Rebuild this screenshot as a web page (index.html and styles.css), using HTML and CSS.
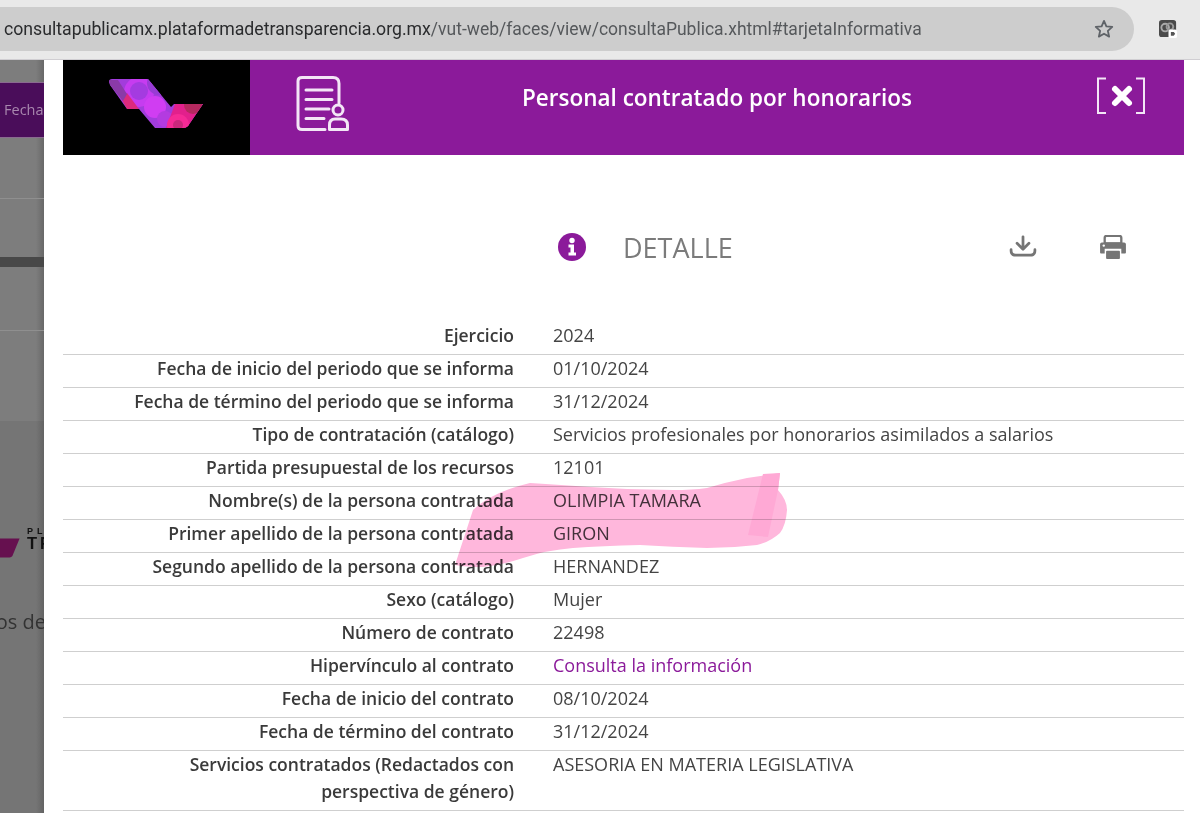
FILE: index.html
```html
<!DOCTYPE html>
<html lang="es">
<head>
<meta charset="utf-8">
<title>Personal contratado por honorarios</title>
<link rel="stylesheet" href="styles.css">
</head>
<body>
<header class="browser">
  <div class="url">
    <span class="url-text"><span class="host">consultapublicamx.plataformadetransparencia.org.mx</span>/vut-web/faces/view/consultaPublica.xhtml#tarjetaInformativa</span>
    <svg class="star" viewBox="0 0 24 24" width="22" height="22"><path d="M12 3.200l2.600 5.900 6.400.6-4.800 4.300 1.400 6.300L12 17.100l-5.600 3.200 1.400-6.300L3 9.700l6.400-.6z" fill="none" stroke="#5f6368" stroke-width="2" stroke-linejoin="round"/></svg>
  </div>
  <svg class="ext" viewBox="0 0 20 20" width="19" height="19">
    <rect width="18" height="18" x="0" y="0" rx="3" fill="#4a4a4a"/>
    <circle cx="6.500" cy="8" r="4" fill="none" stroke="#aaa" stroke-width="2"/>
    <circle cx="11.500" cy="7" r="3.500" fill="none" stroke="#999" stroke-width="2"/>
    <rect x="10" y="10" width="9" height="9" rx="2" fill="#fff"/>
    <path d="M12.500 12.500h3l1.500 2-1.500 2h-3z" fill="#555"/>
  </svg>
</header>
<main class="stage">
  <aside class="behind">
    <div class="tab-band"><span>Fecha de</span></div>
    <div class="rule rule-a"></div>
    <div class="dark-band"></div>
    <div class="rule rule-b"></div>
    <div class="lower">
      <div class="brand">
        <svg class="brand-mark" viewBox="0 0 22 20" width="21" height="20"><path d="M0 0h20.500L13 18.500q-1 1.500-3 1.500H0z" fill="#66104f"/></svg>
        <div class="brand-text"><span class="brand-small">PLATA</span><span class="brand-big">TRANS</span></div>
      </div>
      <p class="behind-copy">Datos de</p>
    </div>
  </aside>
  <section class="modal">
    <div class="banner">
      <div class="logo-box">
        <svg viewBox="0 0 96 52" width="96" height="52">
          <defs>
            <clipPath id="rib"><path d="M0 5Q0 2 3 2H39L62 30 65 27H94L79 49Q77 51 74 51H46L30 32H18L1 8Z"/></clipPath>
          </defs>
          <g clip-path="url(#rib)">
            <rect width="96" height="52" fill="#a23cdc"/>
            <circle cx="30" cy="15" r="15" fill="#c63cf0"/>
            <circle cx="30" cy="14" r="9" fill="#a43be0"/>
            <circle cx="50" cy="6" r="12" fill="#983cd4"/>
            <circle cx="46" cy="30" r="11" fill="#d03df2"/>
            <circle cx="56" cy="42" r="8" fill="#b33be0"/>
            <path d="M57 51L66 27H95L79 51Z" fill="#e2208c"/>
            <circle cx="84" cy="28" r="9" fill="#b5295f"/>
            <circle cx="69" cy="48" r="11" fill="#f52a96"/>
            <circle cx="69" cy="48" r="5" fill="#c9287c"/>
            <path d="M12 21L18 16 30 32H18Z" fill="#dc2a7c"/>
            <path d="M0 3H9L18 17 14 24 1 8Z" fill="#8a3aa8"/>
          </g>
        </svg>
      </div>
      <div class="banner-main">
        <svg class="doc-icon" viewBox="0 0 54 56" width="54" height="56" fill="none" stroke="#f3e6f6" stroke-linecap="round" stroke-linejoin="round">
          <path d="M29 53.500H6Q2 53.500 2 49.500V5Q2 1.500 6 1.500H37Q43 1.500 43 7.500V27" stroke-width="3"/>
          <path d="M10 14H36M10 23.500H36M10 33H33M10 42.500H28" stroke-width="3"/>
          <circle cx="42" cy="34" r="5" stroke-width="3"/>
          <path d="M33.500 53.500V49Q33.500 43 39 43H45Q51.500 43 51.500 49V53.500Z" stroke-width="3"/>
        </svg>
        <h1>Personal contratado por honorarios</h1>
        <svg class="close-icon" viewBox="0 0 48 38" width="48" height="38" fill="none" stroke="#f3e6f6">
          <path d="M9 1.500H1V36H9M39 1.500H47V36H39" stroke-width="2"/>
          <path d="M18 12L32 26M32 12L18 26" stroke="#fff" stroke-width="6" stroke-linecap="round"/>
        </svg>
      </div>
    </div>
    <div class="detail-head">
      <svg class="info-icon" viewBox="0 0 28 28" width="28" height="28"><circle cx="14" cy="14" r="14" fill="#8b1a9a"/><circle cx="14" cy="7.500" r="2.700" fill="#fff"/><path d="M10.500 11.500H16V19.500H18V22.500H10.500V19.500H12.500V14.500H10.500Z" fill="#fff"/></svg>
      <h2>DETALLE</h2>
      <div class="actions">
        <svg viewBox="0 0 30 24" width="28" height="22" fill="none" stroke="#757575" stroke-linecap="round" stroke-linejoin="round"><path d="M15 2V15M8.500 9L15 15.500 21.500 9" stroke-width="3"/><path d="M2 16V17Q2 22 7 22H23Q28 22 28 17V16" stroke-width="3"/></svg>
        <svg viewBox="0 0 30 26" width="28" height="24"><path d="M6 9V3Q6 1 8 1H22Q24 1 24 3V9Z" fill="none" stroke="#757575" stroke-width="2.500"/><path d="M3 8H27Q29 8 29 10V19Q29 20 28 20H24V15H6V20H2Q1 20 1 19V10Q1 8 3 8Z" fill="#757575"/><circle cx="5" cy="11.500" r="1.300" fill="#fff"/><rect x="7.500" y="17" width="15" height="9" rx="1" fill="#757575"/></svg>
      </div>
    </div>
    <dl class="table">
      <div class="row"><dt>Ejercicio</dt><dd>2024</dd></div>
      <div class="row"><dt>Fecha de inicio del periodo que se informa</dt><dd>01/10/2024</dd></div>
      <div class="row"><dt>Fecha de término del periodo que se informa</dt><dd>31/12/2024</dd></div>
      <div class="row"><dt>Tipo de contratación (catálogo)</dt><dd>Servicios profesionales por honorarios asimilados a salarios</dd></div>
      <div class="row"><dt>Partida presupuestal de los recursos</dt><dd>12101</dd></div>
      <div class="row"><dt>Nombre(s) de la persona contratada</dt><dd>OLIMPIA TAMARA</dd></div>
      <div class="row"><dt>Primer apellido de la persona contratada</dt><dd>GIRON</dd></div>
      <div class="row"><dt>Segundo apellido de la persona contratada</dt><dd>HERNANDEZ</dd></div>
      <div class="row"><dt>Sexo (catálogo)</dt><dd>Mujer</dd></div>
      <div class="row"><dt>Número de contrato</dt><dd>22498</dd></div>
      <div class="row"><dt>Hipervínculo al contrato</dt><dd><a href="#">Consulta la información</a></dd></div>
      <div class="row"><dt>Fecha de inicio del contrato</dt><dd>08/10/2024</dd></div>
      <div class="row"><dt>Fecha de término del contrato</dt><dd>31/12/2024</dd></div>
      <div class="row"><dt>Servicios contratados (Redactados con perspectiva de género)</dt><dd>ASESORIA EN MATERIA LEGISLATIVA</dd></div>
    </dl>
  </section>
  <svg class="marker" viewBox="0 0 340 100" width="340" height="100">
    <path d="M3 95L21 40Q40 22 78 13Q110 15 138 17Q180 20 221 20Q240 20 255 18Q275 12 295 8L328 3L326 20Q335 30 335 40Q334 55 328 63Q318 72 305 75Q280 78 255 78Q220 77 188 75Q150 76 121 78Q95 80 71 88Q50 95 31 97Q15 97 3 95Z" fill="#ffb7dc"/>
    <path d="M311 4L328 3 326 20 316 67 296 65Z" fill="#ffa9d5"/>
  </svg>
</main>
</body>
</html>
```
FILE: styles.css
```css
* { box-sizing: border-box; }
html, body { margin: 0; height: 813px; overflow: hidden; }
body { font-family: "Open Sans", sans-serif; background: #fff; color: #333; }

.browser {
  height: 60px;
  display: flex;
  align-items: center;
  background: #e9e9e9;
  border-bottom: 1px solid #d0ced2;
  padding: 0 22px 0 0;
}
.url {
  width: 1135px;
  height: 44px;
  margin-top: -1px;
  background: #cdcdcd;
  border-radius: 0 22px 22px 0;
  display: flex;
  align-items: center;
  justify-content: space-between;
  padding: 0 19px 0 4px;
}
.url-text { font-family: Roboto, sans-serif; font-size: 17.500px; color: #55585b; white-space: nowrap; }
.host { color: #2a2b2d; font-size: 17.700px; }
.star { flex: none; }
.ext { margin-left: 25px; flex: none; }

.stage { position: relative; display: flex; height: 753px; }

.behind {
  width: 44px;
  flex: none;
  overflow: hidden;
  background: linear-gradient(to right, #7d7d7d 0, #7d7d7d 36px, #686868 44px);
  padding-top: 22px;
  white-space: nowrap;
}
.tab-band {
  height: 56px;
  background: #4a0d5a;
  border-top: 1px solid #8a6a90;
  border-bottom: 1px solid #8a6a90;
  padding: 15px 0 0 4px;
  font-size: 14.500px;
  color: #a887ae;
  line-height: 24px;
}
.rule { height: 1px; background: #8f8f8f; }
.rule-a { margin-top: 60px; }
.dark-band { height: 10px; margin-top: 58px; background: #484848; }
.rule-b { margin-top: 63px; }
.lower {
  margin-top: 90px;
  height: 393px;
  background: linear-gradient(to right, #757575 0, #757575 36px, #636363 44px);
  padding-top: 106px;
}
.brand { display: flex; gap: 6px; width: 140px; height: 26px; }
.brand-mark { margin-top: 11px; flex: none; }
.brand-text { display: flex; flex-direction: column; font-family: "Liberation Sans", sans-serif; color: #111; line-height: 1; }
.brand-small { font-size: 9px; letter-spacing: 4px; font-weight: 700; }
.brand-big { font-size: 16.500px; letter-spacing: 3px; font-weight: 700; margin-top: -1px; }
.behind-copy { margin: 56px 0 0 -37px; font-size: 20px; color: #333; line-height: 26px; }

.modal {
  flex: 1;
  background: #fff;
  padding: 0 16px 0 19px;
  min-width: 0;
}
.banner { display: flex; height: 95px; }
.logo-box {
  width: 187px;
  flex: none;
  background: #000;
  padding: 17px 0 0 46px;
}
.logo-box svg { display: block; }
.banner-main {
  flex: 1;
  background: #8b1a9a;
  display: flex;
  align-items: flex-start;
  color: #fff;
}
.doc-icon { margin: 16px 0 0 46px; flex: none; }
.banner-main h1 {
  margin: 21px 0 0 172px;
  font-size: 22.500px;
  font-weight: 600;
  line-height: 34px;
  white-space: nowrap;
}
.close-icon { margin: 17px 39px 0 auto; flex: none; }

.detail-head {
  height: 167px;
  display: flex;
  align-items: flex-start;
  padding: 78px 57px 0 495px;
}
.info-icon { flex: none; }
.detail-head h2 {
  margin: -3px 0 0 37px;
  font-size: 27px;
  font-weight: 400;
  line-height: 36px;
  color: #7b7b7b;
}
.actions { margin: 2px 0 0 auto; display: flex; gap: 62px; align-items: flex-start; }

.table { margin: 0; }
.row {
  display: grid;
  grid-template-columns: 451px 1fr;
  column-gap: 39px;
  min-height: 33px;
  padding: 0 0 5px;
  border-bottom: 1px solid #cfcfcf;
  font-size: 18px;
  line-height: 27px;
}
dt { text-align: right; font-size: 17.500px; font-weight: 600; color: #3a3a3a; padding-left: 51px; }
dd { margin: 0; color: #444; }
dd a { color: #8b1a9a; text-decoration: none; }

.marker {
  position: absolute;
  left: 452px;
  top: 410px;
  mix-blend-mode: multiply;
  pointer-events: none;
}
```
